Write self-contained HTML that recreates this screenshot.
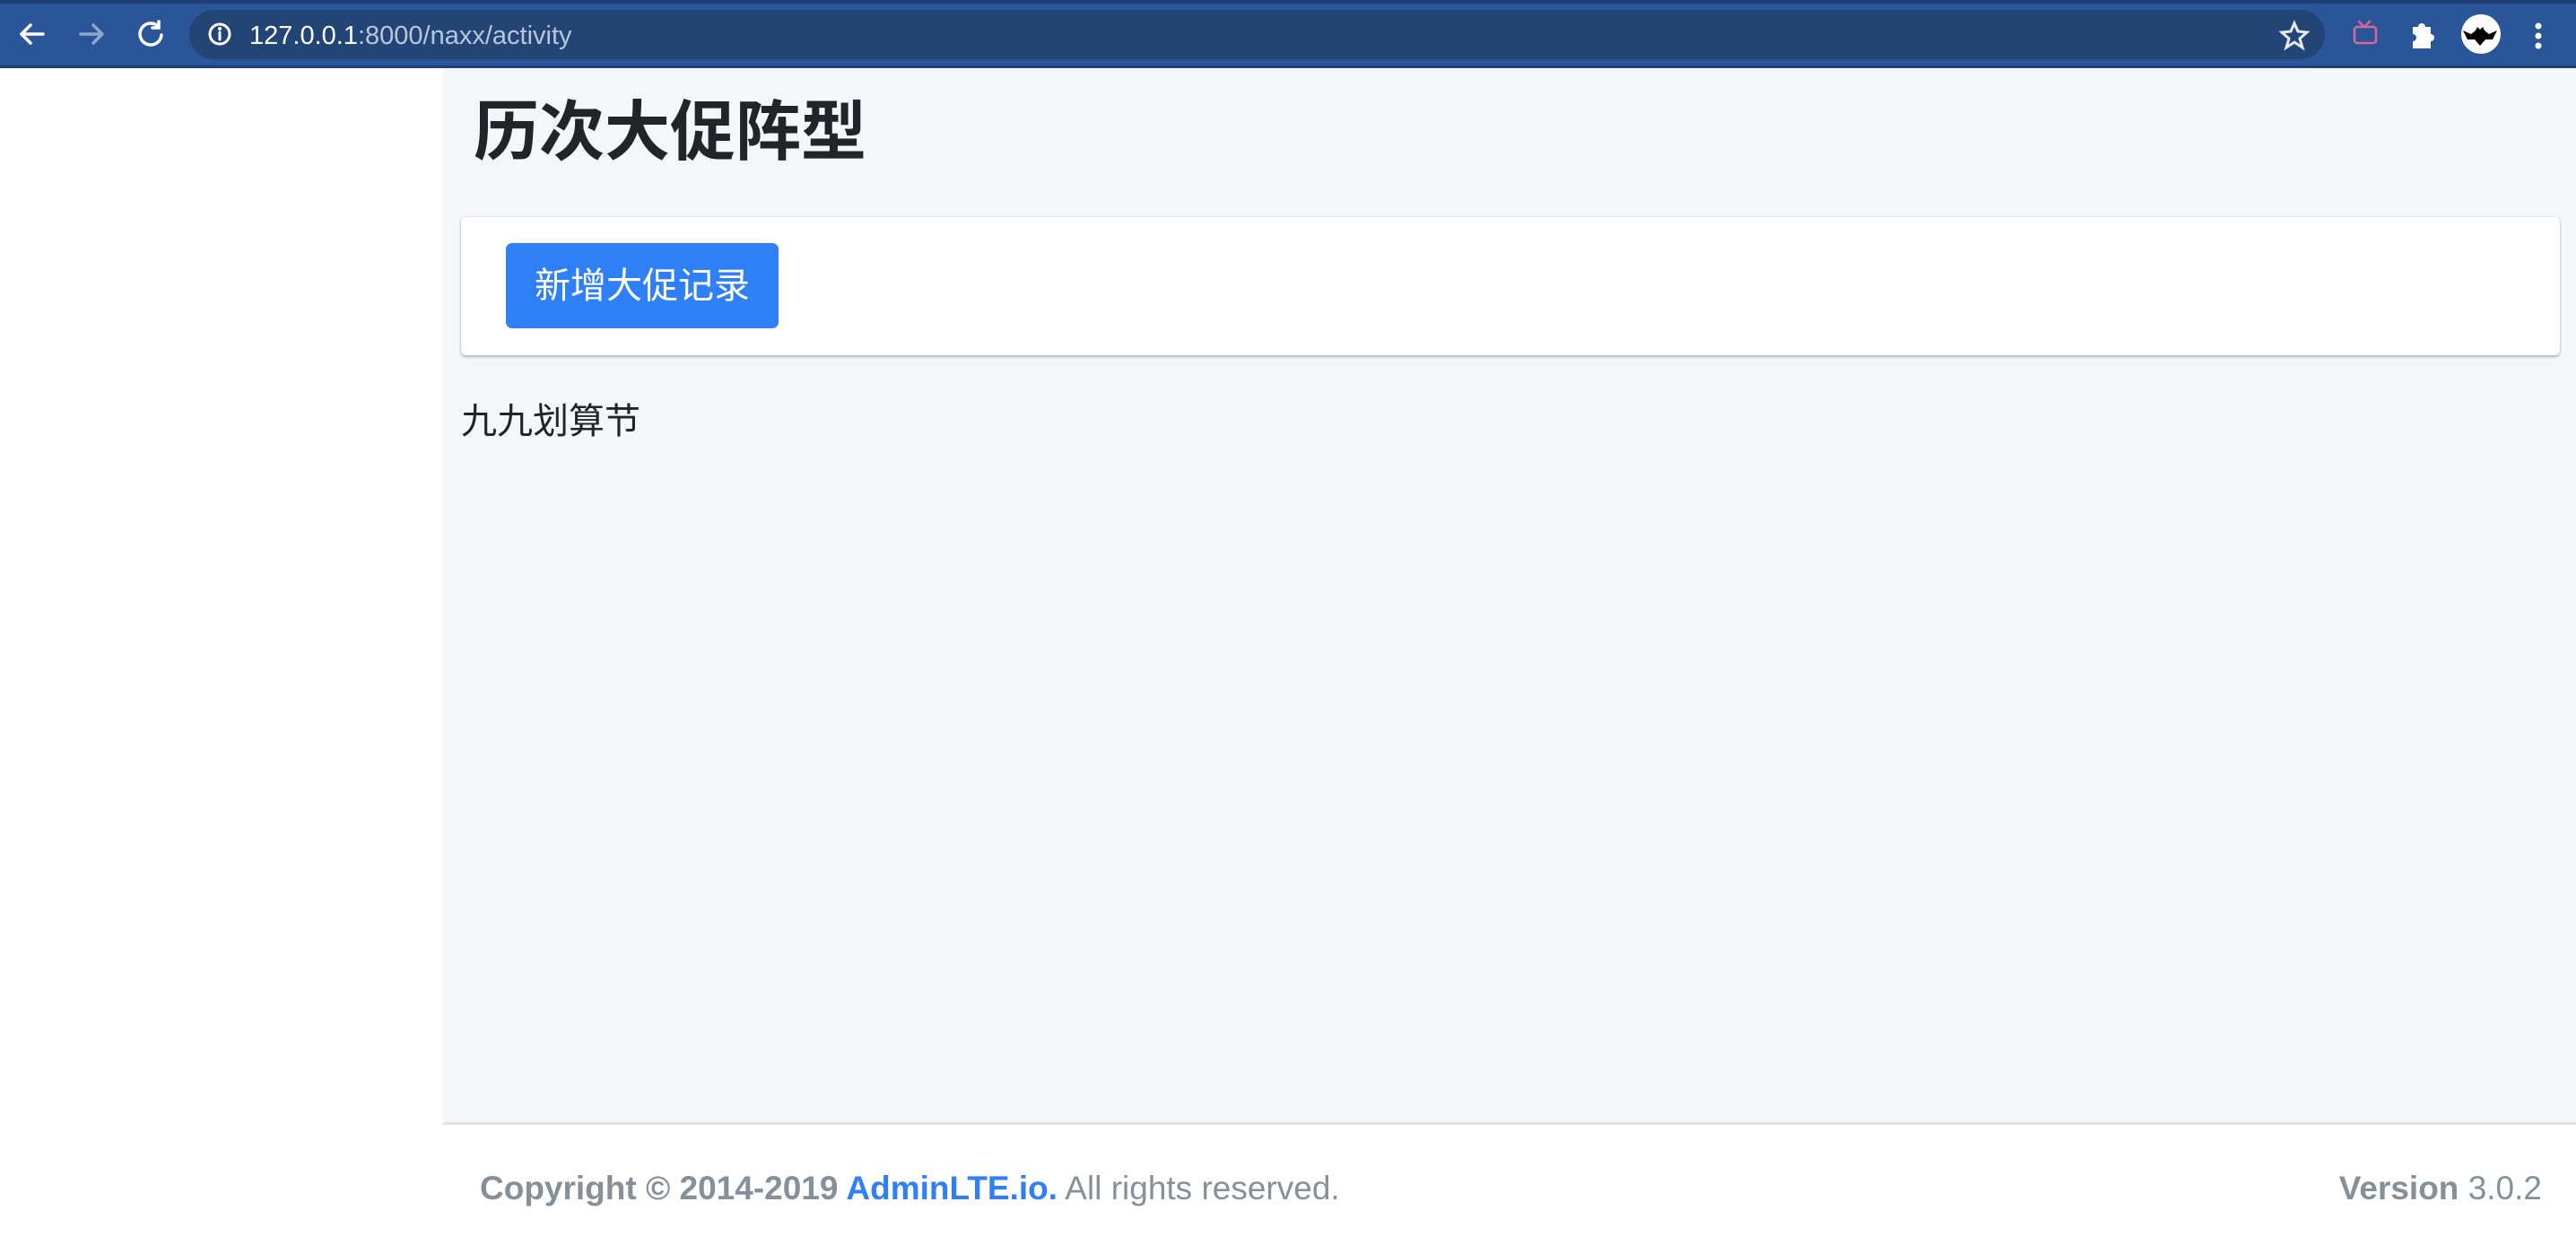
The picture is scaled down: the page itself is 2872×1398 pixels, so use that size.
<!DOCTYPE html>
<html><head><meta charset="utf-8"><style>
*{margin:0;padding:0;box-sizing:border-box}
body{width:2872px;height:1398px;overflow:hidden;background:#fff;font-family:"Liberation Sans","Noto Sans CJK SC",sans-serif;position:relative}
.top{position:absolute;left:0;top:0;width:2872px;height:76px;background:#2a5599;border-top:4px solid #1d3f75;border-bottom:3px solid #1d3f75}
.addr{position:absolute;left:211px;top:7px;width:2381px;height:55px;border-radius:28px;background:#224576}
.url{position:absolute;left:278px;top:18px;font-size:29px;color:#fff;line-height:36px}
.url span{color:#b8c6dc}
.side{position:absolute;left:0;top:76px;width:494px;height:1322px;background:#fff}
.content{position:absolute;left:494px;top:76px;width:2378px;height:1177px;background:#f4f6f9}
h1{position:absolute;left:528px;top:103px;font-size:73px;font-weight:600;color:#212529;line-height:90px}
.card{position:absolute;left:514px;top:242px;width:2340px;height:154px;background:#fff;border-radius:5px;box-shadow:0 0 2px rgba(0,0,0,.15),0 2px 3px rgba(0,0,0,.25)}
.btn{position:absolute;left:564px;top:271px;width:304px;height:95px;background:#2f7ff7;border-radius:7px;color:#fff;font-size:40px;line-height:97px;text-align:center}
.item{position:absolute;left:514px;top:443px;font-size:40px;color:#212529;line-height:54px}
.foot{position:absolute;left:494px;top:1251px;width:2378px;height:147px;background:#fff;border-top:3px solid #dee2e6;color:#869099;font-size:37px}
.foot .l{position:absolute;left:41px;top:50px}
.foot .r{position:absolute;right:38px;top:50px}
.foot b{font-weight:700}
.foot a{color:#2f7ff7;font-weight:700;text-decoration:none}
</style></head><body>
<div class="top">
<div class="addr"></div>
<svg width="2872" height="70" style="position:absolute;left:0;top:0">
<g stroke="#fff" stroke-width="3.5" fill="none" stroke-linecap="round">
<path d="M24 34h24M24 34l10-10M24 34l10 10"/>
<path d="M90 34h24M114 34l-10-10M114 34l-10 10" stroke="#8fa7cc"/>
<path d="M177 26a12 12 0 1 0 3 9M177 20v7h-7"/>
<circle cx="245" cy="34" r="11" stroke-width="3"/>
<path d="M245 32v8" stroke-width="3"/>
<path d="M2558 22l4 9 10 1-8 7 3 10-9-6-9 6 3-10-8-7 10-1z" stroke="#e6e9ef" stroke-width="3"/>
<rect x="2625" y="26" width="24" height="18" rx="3" stroke="#d9659e" stroke-width="2.5"/>
<path d="M2630 20l6 6 6-6" stroke="#d9659e" stroke-width="2.5"/>
</g>
<circle cx="245" cy="28" r="2" fill="#fff"/>
<path d="M2690 26h6a4 4 0 0 1 8 0h6v8a4 4 0 0 1 0 8v8h-20v-8a4 4 0 0 0 0-8z" fill="#fff"/>
<circle cx="2766" cy="34" r="22" fill="#fff"/>
<path d="M2746 30l9 4 5-4 2-4 3 3 3-3 2 4 5 4 9-4-5 10-8 0-6 7-6-7-8 0z" fill="#000"/>
<circle cx="2830" cy="25" r="3.5" fill="#fff"/><circle cx="2830" cy="36" r="3.5" fill="#fff"/><circle cx="2830" cy="47" r="3.5" fill="#fff"/>
</svg>
<div class="url">127.0.0.1<span>:8000/naxx/activity</span></div>
</div>
<div class="side"></div>
<div class="content"></div>
<h1>历次大促阵型</h1>
<div class="card"></div>
<div class="btn">新增大促记录</div>
<div class="item">九九划算节</div>
<div class="foot"><div class="l"><b>Copyright © 2014-2019 <a>AdminLTE.io.</a></b> All rights reserved.</div><div class="r"><b>Version</b> 3.0.2</div></div>
</body></html>
